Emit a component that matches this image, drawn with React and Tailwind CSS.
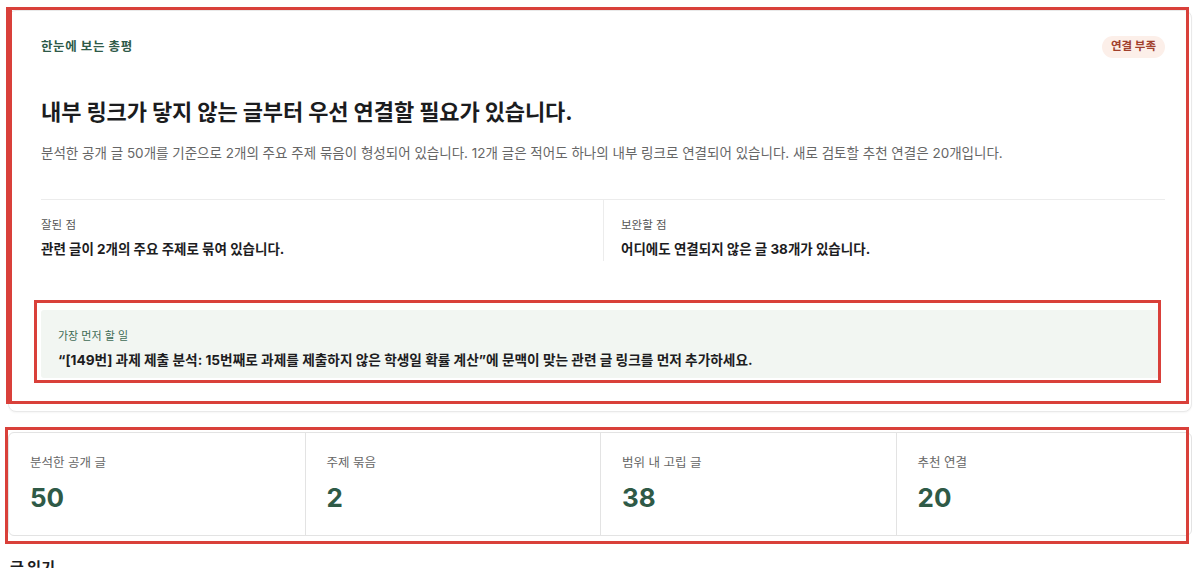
import React from 'react';

const stats = [
  { label: '분석한 공개 글', value: '50' },
  { label: '주제 묶음', value: '2' },
  { label: '범위 내 고립 글', value: '38' },
  { label: '추천 연결', value: '20' },
];

function Annotation({ className }) {
  return <div className={`pointer-events-none absolute border-[3px] border-[#d9403a] ${className}`} />;
}

export default function App() {
  return (
    <div
      className="relative h-[568px] overflow-hidden bg-white px-2 pt-[10px] text-[#1d1d1f]"
      style={{ fontFamily: 'Inter, "Noto Sans CJK KR", "Noto Sans", sans-serif' }}
    >
      {/* summary card */}
      <section className="rounded-lg border border-[#e9e9e9] bg-white pb-[33px] pl-[32px] pr-[26px] pt-[25px] shadow-[0_1px_2px_rgba(0,0,0,0.04)]">
        <div className="flex h-[22px] items-center justify-between">
          <span className="text-[12.5px] font-bold tracking-[0.6px] text-[#2e5a48]">한눈에 보는 총평</span>
          <span className="flex h-[22px] items-center rounded-full bg-[#fcefe9] px-[9px] text-[11.5px] font-bold text-[#a1402c]">
            연결 부족
          </span>
        </div>

        <h1 className="mt-[39px] text-[22px] font-bold leading-[30px] tracking-[-0.1px] text-[#1b1c1e]">
          내부 링크가 닿지 않는 글부터 우선 연결할 필요가 있습니다.
        </h1>
        <p className="mt-[15px] text-[13.5px] leading-[22px] text-[#666]">
          분석한 공개 글 50개를 기준으로 2개의 주요 주제 묶음이 형성되어 있습니다. 12개 글은 적어도 하나의 내부 링크로 연결되어 있습니다. 새로 검토할 추천 연결은 20개입니다.
        </p>

        <div className="mt-[35px] grid grid-cols-2 border-t border-[#ececec]">
          <div className="pb-[2px] pt-[16px]">
            <div className="text-[11.5px] leading-[18px] text-[#555]">잘된 점</div>
            <div className="mt-[5px] text-[13.5px] font-bold leading-[20px]">관련 글이 2개의 주요 주제로 묶여 있습니다.</div>
          </div>
          <div className="border-l border-[#ececec] pb-[2px] pl-[17px] pt-[16px]">
            <div className="text-[11.5px] leading-[18px] text-[#555]">보완할 점</div>
            <div className="mt-[5px] text-[13.5px] font-bold leading-[20px]">어디에도 연결되지 않은 글 38개가 있습니다.</div>
          </div>
        </div>

        <div className="mr-[4px] mt-[49px] rounded-[3px] bg-[#f2f6f2] px-[17px] pb-[8px] pt-[18px]">
          <div className="text-[11px] leading-[16px] text-[#3f6b55]">가장 먼저 할 일</div>
          <div className="mt-[6px] text-[13.7px] font-bold leading-[20px]">
            “[149번] 과제 제출 분석: 15번째로 과제를 제출하지 않은 학생일 확률 계산”에 문맥이 맞는 관련 글 링크를 먼저 추가하세요.
          </div>
        </div>
      </section>

      {/* stats */}
      <section className="mt-5 grid grid-cols-4 rounded-md border border-[#e3e3e3] bg-white">
        {stats.map((s, i) => (
          <div key={s.label} className={`pb-[21px] pl-[21px] pt-[21px] ${i > 0 ? 'border-l border-[#e3e3e3] pl-[19px]' : ''}`}>
            <div className="text-[12.5px] leading-[18px] text-[#666]">{s.label}</div>
            <div className="mt-[10px] text-[26px] font-bold leading-[32px] text-[#2f5a47]">{s.value}</div>
          </div>
        ))}
      </section>

      <div className="mt-[21px] pl-[2px] text-[15px] font-bold">글 읽기</div>

      {/* review annotations */}
      <Annotation className="left-[6px] top-[7px] h-[397px] w-[1183px] border-l-[6px]" />
      <Annotation className="left-[34px] top-[300px] h-[83px] w-[1127px]" />
      <Annotation className="left-[5px] top-[427px] h-[117px] w-[1184px]" />
    </div>
  );
}
